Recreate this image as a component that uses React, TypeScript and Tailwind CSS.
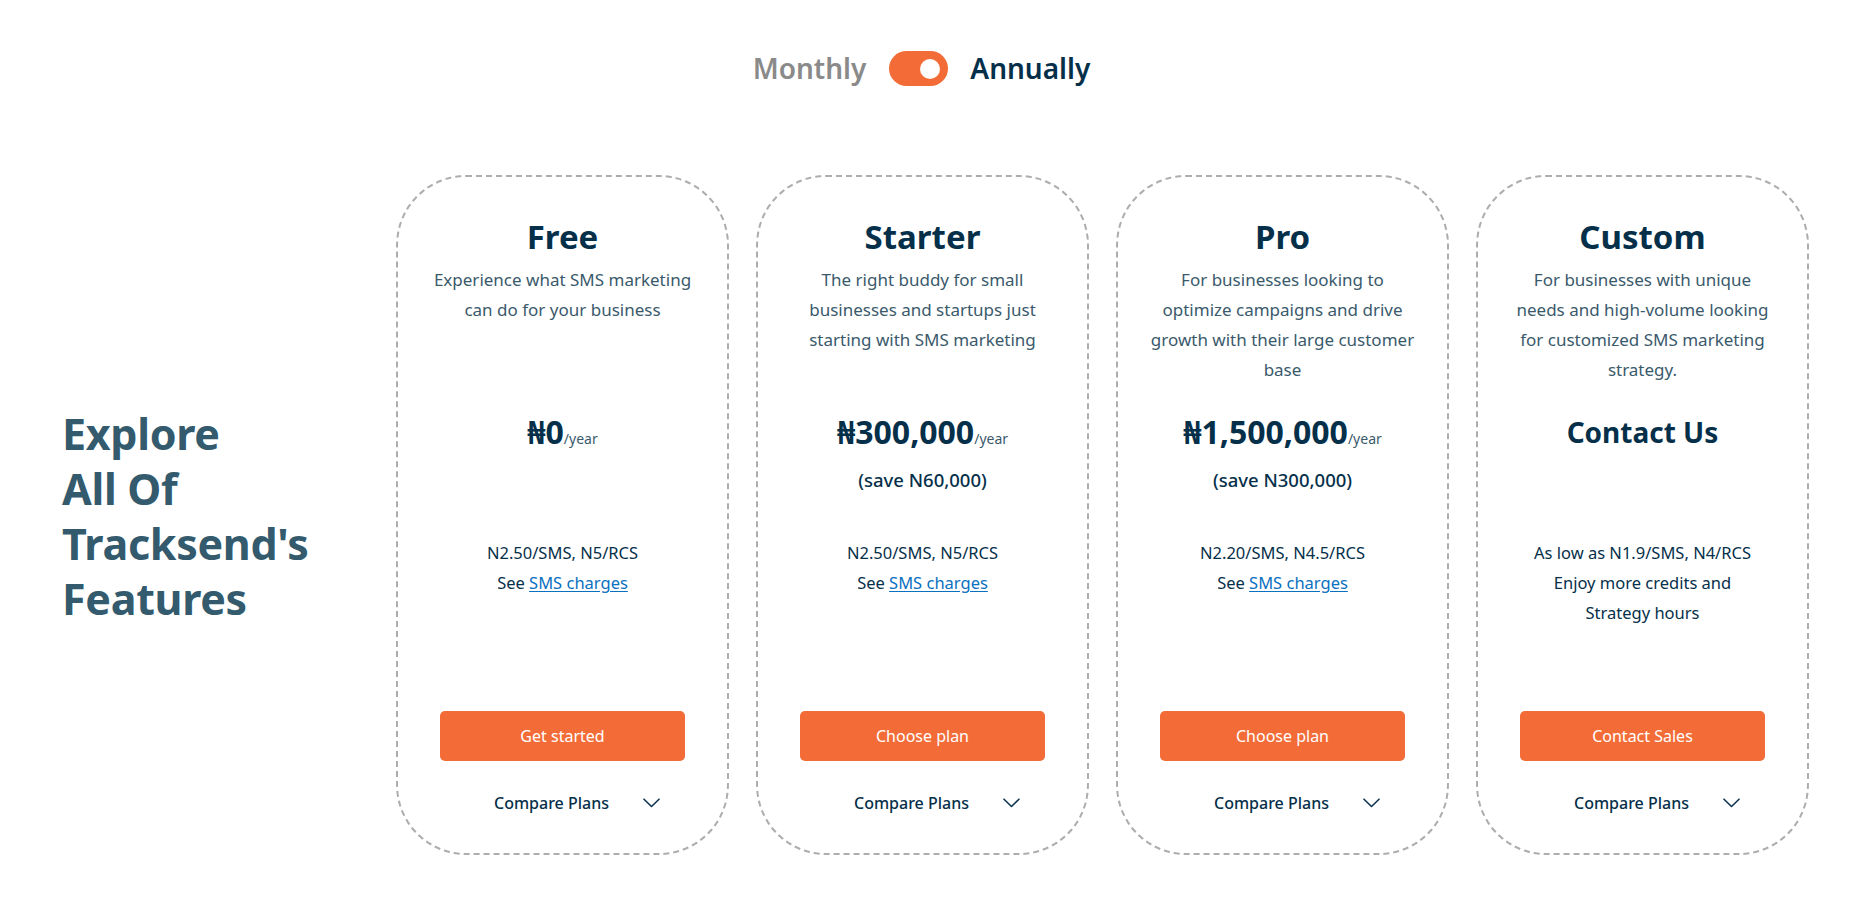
import React from "react";

const NAVY = "text-[#06304a]";

type Plan = {
  name: string;
  desc: string[];
  price?: string;
  contact?: boolean;
  save?: string;
  rates: React.ReactNode[];
  cta: string;
};

const Link = () => (
  <>
    See <a className="text-[#0a70c0] underline underline-offset-2" href="#">SMS charges</a>
  </>
);

const plans: Plan[] = [
  {
    name: "Free",
    desc: ["Experience what SMS marketing", "can do for your business"],
    price: "₦0",
    rates: ["N2.50/SMS, N5/RCS", <Link key="l" />],
    cta: "Get started",
  },
  {
    name: "Starter",
    desc: ["The right buddy for small", "businesses and startups just", "starting with SMS marketing"],
    price: "₦300,000",
    save: "(save N60,000)",
    rates: ["N2.50/SMS, N5/RCS", <Link key="l" />],
    cta: "Choose plan",
  },
  {
    name: "Pro",
    desc: ["For businesses looking to", "optimize campaigns and drive", "growth with their large customer", "base"],
    price: "₦1,500,000",
    save: "(save N300,000)",
    rates: ["N2.20/SMS, N4.5/RCS", <Link key="l" />],
    cta: "Choose plan",
  },
  {
    name: "Custom",
    desc: ["For businesses with unique", "needs and high-volume looking", "for customized SMS marketing", "strategy."],
    contact: true,
    rates: ["As low as N1.9/SMS, N4/RCS", "Enjoy more credits and", "Strategy hours"],
    cta: "Contact Sales",
  },
];

function Card({ plan }: { plan: Plan }) {
  return (
    <div className="flex h-[680px] flex-col items-center rounded-[70px] border-2 border-dashed border-[#adadad] pt-[40px] text-center">
      <h2 className={`h-[40px] text-[33px] font-bold leading-[40px] ${NAVY}`}>{plan.name}</h2>
      <div className="mt-[8px] h-[120px] text-[17px] leading-[30px] text-[#3a5a6c]">
        {plan.desc.map((d, i) => (
          <div key={i}>{d}</div>
        ))}
      </div>
      <div className="mt-[27px] h-[126px]">
        {plan.contact ? (
          <div className={`text-[28px] font-bold leading-[40px] ${NAVY}`}>Contact Us</div>
        ) : (
          <>
            <div className={`leading-[40px] ${NAVY}`}>
              <span className="text-[32px] font-bold">{plan.price}</span>
              <span className="text-[14px] text-[#3a5a6c]">/year</span>
            </div>
            {plan.save && (
              <div className={`mt-[7px] text-[18.5px] font-medium leading-[28px] ${NAVY}`}>{plan.save}</div>
            )}
          </>
        )}
      </div>
      <div className={`h-[90px] text-[16.5px] leading-[30px] ${NAVY}`}>
        {plan.rates.map((r, i) => (
          <div key={i}>{r}</div>
        ))}
      </div>
      <button className="mt-[83px] h-[50px] w-[245px] rounded-[5px] bg-[#f36c38] text-[16px] text-white">
        {plan.cta}
      </button>
      <div className={`mt-[30px] flex items-center gap-[34px] pl-[29px] text-[16px] font-medium leading-[24px] ${NAVY}`}>
        <span>Compare Plans</span>
        <svg width="17" height="10" viewBox="0 0 17 10" fill="none">
          <path d="M1 1.2L8.5 8.5L16 1.2" stroke="#0d3450" strokeWidth="1.6" strokeLinecap="round" strokeLinejoin="round" />
        </svg>
      </div>
    </div>
  );
}

export default function App() {
  return (
    <div className="min-h-[900px] w-full bg-white" style={{ fontFamily: '"Noto Sans", "Open Sans", sans-serif' }}>
      <div className="flex items-center justify-center pr-[26px] pt-[51px]">
        <span className="text-[28px] font-semibold leading-[35px] text-[#8a8a8a]">Monthly</span>
        <div className="ml-[23px] flex h-[35px] w-[59px] items-center justify-end rounded-full bg-[#f36c38] pr-[8px]">
          <div className="h-[20px] w-[20px] rounded-full bg-white" />
        </div>
        <span className={`ml-[22px] text-[28px] font-semibold leading-[35px] ${NAVY}`}>Annually</span>
      </div>
      <div className="mt-[89px] flex pl-[62px]">
        <div className="flex w-[334px] items-center">
          <h1 className="pt-[1px] text-[43px] font-bold leading-[55px] tracking-[-0.3px] text-[#335a6d]">
            Explore
            <br />
            All Of
            <br />
            Tracksend's
            <br />
            Features
          </h1>
        </div>
        <div className="grid w-[1413px] grid-cols-4 gap-[27px]">
          {plans.map((p) => (
            <Card key={p.name} plan={p} />
          ))}
        </div>
      </div>
    </div>
  );
}
